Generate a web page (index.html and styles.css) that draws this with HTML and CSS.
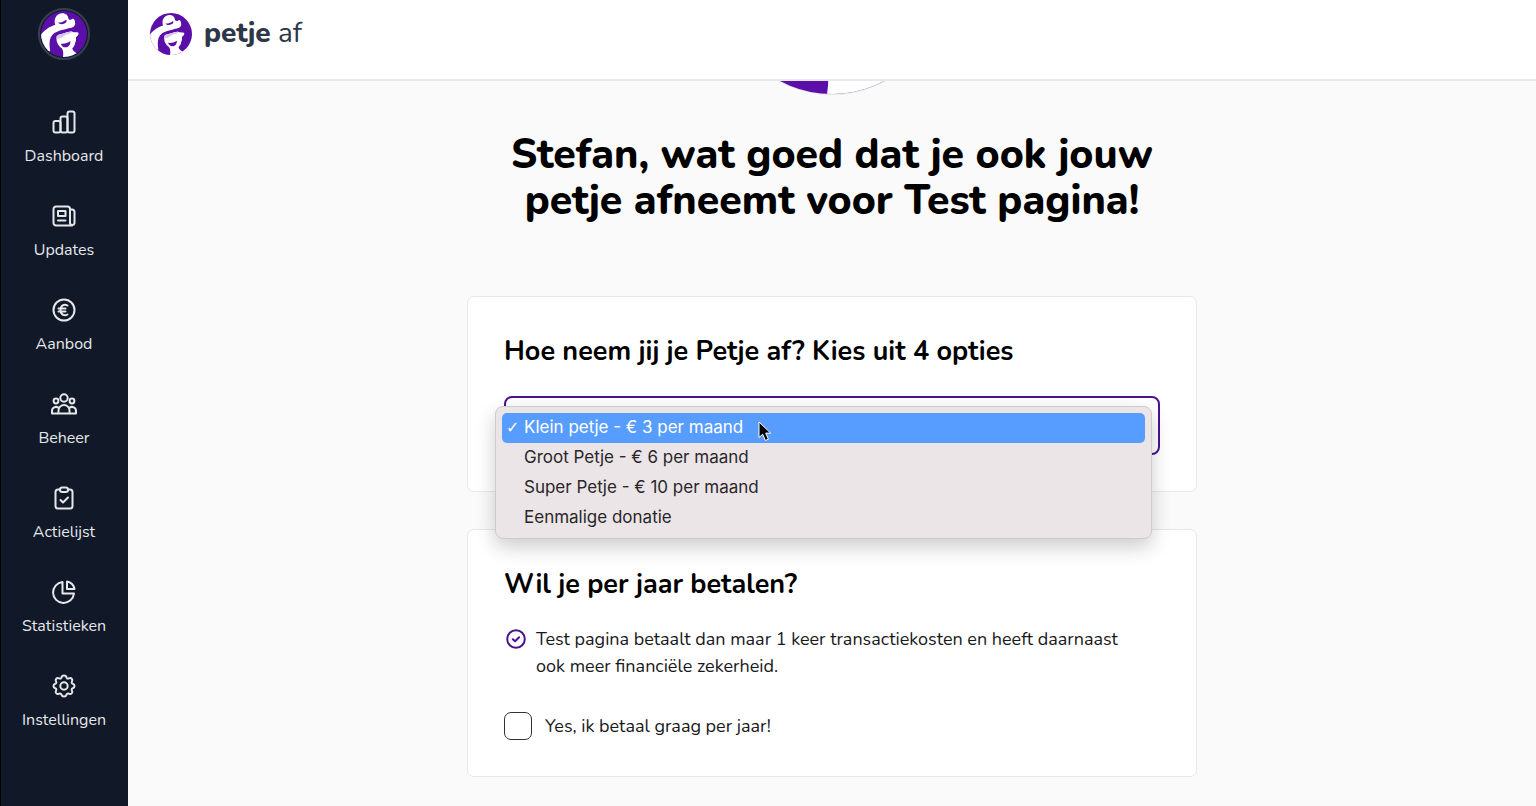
FILE: index.html
```
<!DOCTYPE html>
<html lang="nl">
    <head>
        <meta charset="utf-8">
        <meta name="viewport" content="width=device-width, initial-scale=1">
        <title>Petje af</title>
        <link rel="stylesheet" href="styles.css">
    </head>
    <body>
        <svg class="defs" aria-hidden="true">
            <clipPath id="round"><circle cx="50" cy="50" r="50"/></clipPath>
            <symbol id="petje" viewBox="0 0 100 100">
                <g clip-path="url(#round)">
                    <rect width="100" height="100" fill="#5b0fa8"/>
                    <!-- hat and arm -->
                    <path fill="#fff" d="M31 30C27 18 33 6 46 5c9 0 13 5 14 13 4 2 6 1 8-1 5-1 7 6 6 13-3 7-11 7-19 9-10 2-18 4-26 9-11 8-12 22-9 39l-11 6-12-35c3-10 16-22 34-28z"/>
                    <!-- face and neck -->
                    <path fill="#fff" d="M34 55c5-5 9-4 14-6 8-2 14-5 20-4 5 2 9 0 13 2 2 5-2 8-5 10 0 4 1 8-2 12 0 6-3 9-6 12 1 6 6 10 16 14l-4 9H47c2-9 2-18-2-23-7-5-13-13-11-26z"/>
                    <path fill="#d9c8ee" d="M34 55c5-5 9-4 14-6 8-2 14-5 20-4-4 6-11 4-16 8-6 4-10 8-18 7z"/>
                    <path fill="#5b0fa8" d="M37 25c5 1 10-1 18-6 2 3 0 6-4 8-6 3-11 2-14-2zM43 71c8 1 14-1 21-5 0 9-5 13-11 13-5 0-8-3-10-8z"/>
                </g>
            </symbol>
        </svg>

        <div class="page">
            <nav class="sidebar">
                <a class="avatar" href="#" aria-label="Profiel"><svg><use href="#petje"/></svg></a>
                <a class="item" href="#">
                    <svg class="icon" viewBox="0 0 24 24"><rect x="1.5" y="11" width="7" height="11.5" rx="2"/><rect x="8.5" y="6.5" width="7" height="16" rx="2"/><rect x="15.5" y="1.5" width="7" height="21" rx="2"/></svg>
                    <span>Dashboard</span>
                </a>
                <a class="item" href="#">
                    <svg class="icon" viewBox="0 0 24 24"><path d="M20.200 21.500H4A2.500 2.500 0 0 1 1.500 19V5A2.500 2.500 0 0 1 4 2.500h11.500A2.500 2.500 0 0 1 18 5v14.200a2.300 2.300 0 0 0 4.500 0V8A2.500 2.500 0 0 0 20 5.500h-2"/><path d="M6 7h7.500v5H6zM6 16.500h7.500"/></svg>
                    <span>Updates</span>
                </a>
                <a class="item" href="#">
                    <svg class="icon" viewBox="0 0 24 24"><circle cx="12" cy="12" r="10.500"/><path d="M15.500 7.500c-3.500-2-7 0-7 4.500s3.500 6.500 7 4.500M6.500 10.500h7M6.500 13.500h7"/></svg>
                    <span>Aanbod</span>
                </a>
                <a class="item" href="#">
                    <svg class="icon" viewBox="0 0 24 24"><circle cx="12" cy="6" r="3.700"/><circle cx="4" cy="9" r="2.400"/><circle cx="20" cy="9" r="2.400"/><path d="M6.500 21.500v-3a5.500 5.500 0 0 1 11 0v3zM6.500 21.500H0v-2.500a4 4 0 0 1 6.500-3.200M17.500 21.500H24v-2.500a4 4 0 0 0-6.500-3.200"/></svg>
                    <span>Beheer</span>
                </a>
                <a class="item" href="#">
                    <svg class="icon" viewBox="0 0 24 24"><path d="M8 3.500H6A2.500 2.500 0 0 0 3.500 6v14A2.500 2.500 0 0 0 6 22.500h12a2.500 2.500 0 0 0 2.500-2.500V6A2.500 2.500 0 0 0 18 3.500h-2"/><rect x="8" y="1.500" width="8" height="4.500" rx="2.200"/><path d="M8.500 14l2.500 2.500 5-5"/></svg>
                    <span>Actielijst</span>
                </a>
                <a class="item" href="#">
                    <svg class="icon" viewBox="0 0 24 24"><path d="M10.500 2a10.500 10.500 0 1 0 11.500 11.500H10.500z"/><path d="M15 1.500v7.500h7.500a9.500 9.500 0 0 0-7.500-7.500z"/></svg>
                    <span>Statistieken</span>
                </a>
                <a class="item" href="#">
                    <svg class="icon" viewBox="0 0 24 24"><circle cx="12" cy="12" r="3.700"/><path d="M9.500 3.400C10 .9 14 .9 14.500 3.400c.3 1.100 1.300 1.500 2.300 1 2.300-1.200 4.500 1 3.100 3-.6 1-.1 2 .9 2.300 2.300.6 2.300 4 0 4.600-1 .3-1.500 1.300-.9 2.300 1.400 2-.8 4.300-3.100 3-1-.5-2 0-2.300 1-.5 2.500-4.500 2.500-5 0-.3-1-1.300-1.500-2.300-1-2.300 1.300-4.500-1-3.100-3 .6-1 .1-2-.9-2.300-2.300-.6-2.300-4 0-4.600 1-.3 1.500-1.300.9-2.300-1.400-2 .8-4.200 3.100-3 1 .5 2 .1 2.300-1z"/></svg>
                    <span>Instellingen</span>
                </a>
            </nav>

            <div class="content">
                <header class="header">
                    <a class="brand" href="#">
                        <svg><use href="#petje"/></svg>
                        <span><b>petje</b> af</span>
                    </a>
                </header>

                <main class="main">
                    <div class="hero">
                        <svg><use href="#petje"/></svg>
                    </div>
                    <h1>Stefan, wat goed dat je ook jouw petje afneemt voor Test pagina!</h1>

                    <section class="card">
                        <h2><label for="optie">Hoe neem jij je Petje af? Kies uit 4 opties</label></h2>
                        <div class="select">
                            <select id="optie">
                                <option selected>Klein petje - € 3 per maand</option>
                                <option>Groot Petje - € 6 per maand</option>
                                <option>Super Petje - € 10 per maand</option>
                                <option>Eenmalige donatie</option>
                            </select>
                            <ul class="menu">
                                <li class="active">Klein petje - € 3 per maand</li>
                                <li>Groot Petje - € 6 per maand</li>
                                <li>Super Petje - € 10 per maand</li>
                                <li>Eenmalige donatie</li>
                            </ul>
                            <svg class="cursor" viewBox="0 0 14 21"><path d="M1 1v15.500l3.700-3.300 2.700 6.300 3-1.300-2.700-6.100h5z"/></svg>
                        </div>
                    </section>

                    <section class="card">
                        <h2>Wil je per jaar betalen?</h2>
                        <p class="note">
                            <svg viewBox="0 0 20 20"><circle cx="10" cy="10" r="8.800"/><path d="M6.800 10.200l2.300 2.100 4-4"/></svg>
                            <span>Test pagina betaalt dan maar 1 keer transactiekosten en heeft daarnaast ook meer financiële zekerheid.</span>
                        </p>
                        <label class="check">
                            <input type="checkbox">
                            <span>Yes, ik betaal graag per jaar!</span>
                        </label>
                    </section>
                </main>
            </div>
        </div>
    </body>
</html>
```
FILE: styles.css
```
*{box-sizing:border-box;margin:0;padding:0;}
body{font-family:Nunito, "Open Sans", sans-serif;font-size:18px;line-height:27px;color:#18181b;background:#fafafa;}
a{color:inherit;text-decoration:none;}
ul{list-style:none;}
svg{display:block;flex:none;}
.defs{position:absolute;width:0;height:0;}

.page{display:flex;min-height:100vh;}

/* sidebar */
.sidebar{display:flex;flex-direction:column;align-items:center;gap:36px;width:128px;flex:none;padding-top:8px;background:#111827;box-shadow:inset 1px 0 #000;color:#e5e7eb;}
.avatar{margin-bottom:14px;padding:1px;border:2px solid #374151;border-radius:50%;}
.avatar svg{width:46px;height:46px;}
.item{display:flex;flex-direction:column;align-items:center;gap:10px;font-size:16px;line-height:24px;}
.icon{width:24px;height:24px;overflow:visible;fill:none;stroke:currentColor;stroke-width:2;stroke-linecap:round;stroke-linejoin:round;}

/* header */
.content{flex:1;min-width:0;}
.header{position:relative;z-index:2;height:81px;padding:13px 22px;background:#fff;border-bottom:2px solid #e8e8ec;}
.brand{display:inline-flex;align-items:center;gap:12px;font-size:28px;line-height:38px;color:#2d3748;}
.brand b{font-weight:800;}
.brand svg{width:42px;height:42px;}
.brand span{margin-bottom:2px;}

/* main */
.main{display:flex;flex-direction:column;align-items:center;padding:0 24px 28px;}
.hero{margin-top:-208px;border-radius:50%;border:1px solid #e5e5e5;}
.hero svg{width:220px;height:220px;}
h1{max-width:732px;margin:37px 0 72px;font-size:41px;line-height:46px;font-weight:800;text-align:center;color:#000;}
.card{width:100%;max-width:730px;padding:36px;background:#fff;border:1px solid #e7e7e7;border-radius:7px;}
.card + .card{margin-top:37px;}
h2{font-size:27px;line-height:38px;font-weight:700;color:#000;}

/* select with open menu */
.select{position:relative;margin-top:25px;}
select{display:block;width:100%;height:59px;padding:0 16px;appearance:none;background:#fff;border:2px solid #4c1290;border-radius:8px;font:inherit;color:inherit;}
.menu{position:absolute;z-index:1;top:10px;left:-9px;right:8px;padding:6px 6px 5px;background:#ebe5e7;border:1px solid #cfcacc;border-radius:8px;box-shadow:0 8px 20px rgba(0,0,0,.2);font-family:Inter, sans-serif;font-size:17px;color:#29272a;}
.menu li{height:30px;padding-left:22px;line-height:29px;border-radius:5px;}
.menu .active{background:#579dff;color:#fff;}
.menu .active:before{content:"✓";float:left;width:18px;margin-left:-18px;font-family:"DejaVu Sans", sans-serif;font-size:16px;}
.cursor{position:absolute;z-index:2;top:25px;left:254px;width:14px;height:21px;fill:#000;stroke:#fff;stroke-width:1;}

.note{display:flex;gap:10px;margin-top:22px;padding-right:24px;}
.note svg{width:20px;height:20px;margin:3px 0 0 2px;fill:none;stroke:#4c1290;stroke-width:2;stroke-linecap:round;stroke-linejoin:round;}
.check{display:flex;align-items:center;gap:13px;margin-top:32px;}
.check input{width:28px;height:28px;appearance:none;background:#fff;border:1px solid #333;border-radius:7px;}
```
